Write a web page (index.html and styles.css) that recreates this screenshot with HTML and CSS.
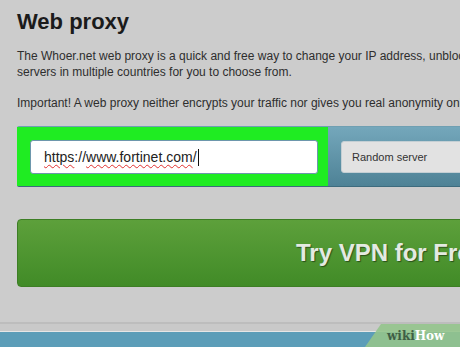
FILE: index.html
```html
<!DOCTYPE html>
<html lang="en">
<head>
<meta charset="UTF-8">
<meta name="viewport" content="width=device-width, initial-scale=1.0">
<title>Web proxy</title>
<link rel="stylesheet" href="styles.css">
</head>
<body>

<div class="page">
  <h1>Web proxy</h1>

  <p class="intro">The Whoer.net web proxy is a quick and free way to change your IP address, unblock websites and hide your activity. We have<br>servers in multiple countries for you to choose from.</p>

  <p class="note">Important! A web proxy neither encrypts your traffic nor gives you real anonymity online.</p>

  <div class="proxy-bar">
    <div class="url-wrap">
      <div class="url-input"><span class="typo">https</span>://<span class="typo">www.fortinet.com</span>/<span class="caret"></span></div>
    </div>
    <div class="server">Random server</div>
  </div>

  <button class="vpn-btn">Try VPN for Free</button>
</div>

<div class="footer">
  <div class="footer-band"></div>
  <div class="wikihow"><span class="wiki">wiki</span>How</div>
</div>

</body>
</html>
```

FILE: styles.css
```css
body {
  margin: 0;
  font-family: "Liberation Sans", Arial, sans-serif;
  background: #cccccc;
  color: #222;
  overflow: hidden;
  width: 460px;
  height: 347px;
  position: relative;
}

.page {
  width: 700px;
  padding-left: 17px;
}

h1 {
  margin: 9px 0 0;
  font-size: 22px;
  line-height: 26px;
  font-weight: bold;
  color: #1b1b1b;
}

.intro, .note {
  font-size: 12px;
  line-height: 16px;
  white-space: nowrap;
  color: #2e2e2e;
}

.intro {
  margin: 13px 0 0;
}

.note {
  margin: 15px 0 0;
}

.proxy-bar {
  margin-top: 15px;
  width: 640px;
  display: flex;
  align-items: center;
  background: linear-gradient(#74a7bb, #4e8296);
  border-top: 1px solid #6f9fb2;
  border-bottom: 1px solid #3d6b7e;
  border-radius: 2px;
}

.url-wrap {
  width: 311px;
  box-sizing: border-box;
  padding: 13px 10px 12px 13px;
  background: #1fec22;
}

.url-input {
  height: 34px;
  box-sizing: border-box;
  background: #fff;
  border: 1px solid #6d97ac;
  border-radius: 3px;
  padding-left: 13px;
  display: flex;
  align-items: center;
  font-size: 14px;
  color: #222;
  white-space: nowrap;
}

.typo {
  text-decoration: underline wavy #e03030;
  text-decoration-thickness: 1px;
  text-underline-offset: 2px;
}

.caret {
  display: inline-block;
  width: 1px;
  height: 17px;
  background: #111;
  margin-left: 1px;
}

.server {
  margin-left: 13px;
  width: 200px;
  height: 32px;
  box-sizing: border-box;
  background: #e2e2e2;
  border: 1px solid #c4cfd4;
  border-radius: 3px;
  padding-left: 10px;
  display: flex;
  align-items: center;
  font-size: 11px;
  color: #333;
}

.vpn-btn {
  display: block;
  margin-top: 32px;
  width: 640px;
  height: 68px;
  padding: 0 0 0 278px;
  text-align: left;
  border: 1px solid #3d7e25;
  border-radius: 4px;
  background: linear-gradient(#5da03b, #418b27);
  font-family: "Liberation Sans", Arial, sans-serif;
  font-size: 24px;
  font-weight: bold;
  line-height: 66px;
  color: #e4eae2;
  text-shadow: 1px 1px 1px rgba(0,0,0,0.45);
}

.footer {
  margin-top: 35px;
  border-top: 2px solid #bdbdbd;
  padding-top: 7px;
  background: #c9c9c9;
}

.footer-band {
  height: 16px;
  border-top: 1px solid #e6e6e6;
  background: #5c9db8;
}

.wikihow {
  position: absolute;
  right: 0;
  bottom: 0;
  width: 95px;
  height: 23px;
  box-sizing: border-box;
  padding: 5px 0 0 22px;
  background: rgba(148,196,140,0.9);
  clip-path: polygon(16px 0, 100% 0, 100% 100%, 0 100%);
  font-family: "DejaVu Serif", "Liberation Serif", serif;
  font-weight: bold;
  font-size: 12px;
  color: #fff;
}

.wiki {
  color: #3f5e45;
}
```
